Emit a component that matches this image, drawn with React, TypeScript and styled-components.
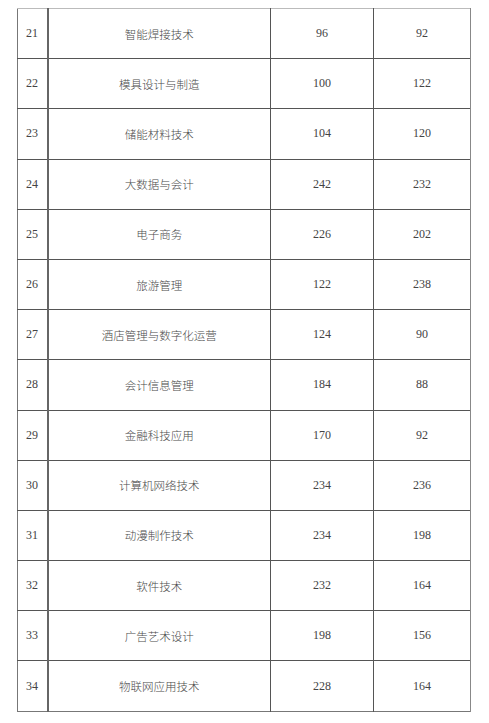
import styled, { createGlobalStyle } from 'styled-components'

const rows: [number, string, number, number][] = [
	[21, '智能焊接技术', 96, 92],
	[22, '模具设计与制造', 100, 122],
	[23, '储能材料技术', 104, 120],
	[24, '大数据与会计', 242, 232],
	[25, '电子商务', 226, 202],
	[26, '旅游管理', 122, 238],
	[27, '酒店管理与数字化运营', 124, 90],
	[28, '会计信息管理', 184, 88],
	[29, '金融科技应用', 170, 92],
	[30, '计算机网络技术', 234, 236],
	[31, '动漫制作技术', 234, 198],
	[32, '软件技术', 232, 164],
	[33, '广告艺术设计', 198, 156],
	[34, '物联网应用技术', 228, 164],
]

const widths = [30, 223, 103, 97]

const GlobalStyle = createGlobalStyle`
	body {
		margin: 0;
		background: #fff;
		font-family: "Liberation Serif", "Noto Sans CJK SC", serif;
		color: #444;
	}
`

function App() {
	return (
		<>
			<GlobalStyle />
			<Page>
				<Table>
					<colgroup>
						{widths.map((w, i) => (
							<Col key={i} $w={w} />
						))}
					</colgroup>
					<tbody>
						{rows.map(([no, name, a, b]) => (
							<Row key={no}>
								<NoCell>{no}</NoCell>
								<NameCell>{name}</NameCell>
								<NumCell>{a}</NumCell>
								<NumCell $last>{b}</NumCell>
							</Row>
						))}
					</tbody>
				</Table>
			</Page>
		</>
	)
}

const Page = styled.div`
	padding: 8px 0 12px 17px;
`

const Table = styled.table`
	width: 453px;
	border-collapse: collapse;
	table-layout: fixed;
	border-top: 1px solid #bbb;
	border-left: 1px solid #777;
	border-bottom: 1px solid #777;
`

const Col = styled.col<{ $w: number }>`
	width: ${p => p.$w}px;
`

const Row = styled.tr`
	height: 50.2px;

	& + & td {
		border-top: 1px solid #555;
	}
`

const Cell = styled.td`
	box-sizing: border-box;
	padding: 0;
	font-size: 12px;
	vertical-align: middle;
	text-align: center;
	border-right: 1px solid #555;
	overflow: hidden;
	white-space: nowrap;
`

const NoCell = styled(Cell)`
	text-align: left;
	padding-left: 8px;
	font-family: "Liberation Serif", serif;
	border-right: 2px solid #666;
`

const NameCell = styled(Cell)`
	font-family: "Noto Sans CJK SC", sans-serif;
	font-size: 11.5px;
	font-weight: 300;
	color: #4a4a4a;
`

const NumCell = styled(Cell)<{ $last?: boolean }>`
	font-family: "Liberation Serif", serif;
	border-right-color: ${p => (p.$last ? '#888' : '#555')};
`

export default App
